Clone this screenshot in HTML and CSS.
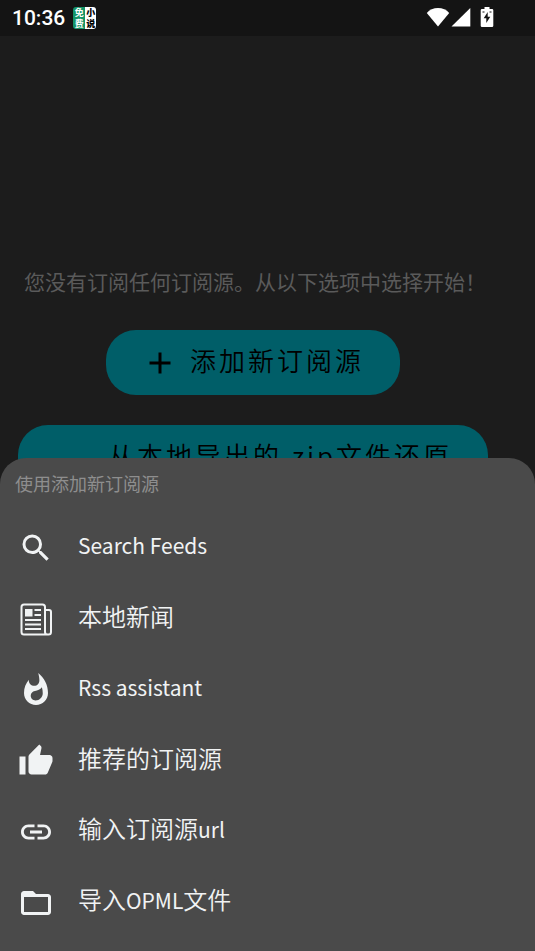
FILE: index.html
```html
<!DOCTYPE html>
<html lang="zh-CN">
<head>
<meta charset="utf-8">
<meta name="viewport" content="width=device-width, initial-scale=1">
<title>添加新订阅源</title>
<link rel="stylesheet" href="styles.css">
</head>
<body>
<header class="status">
  <time class="clock">10:36</time>
  <span class="app-badge"><span class="badge-left">免<br>费</span><span class="badge-right">小<br>说</span></span>
  <span class="indicators">
    <svg width="24" height="20" viewBox="0 0 24 20"><path fill="#fff" d="M12 19.500.8 6C3.500 2.800 7.500 1 12 1s8.500 1.800 11.200 5z"/></svg>
    <svg width="20" height="20" viewBox="0 0 20 20"><path fill="#fff" d="M.5 19.500 19.300 1v18.500z"/></svg>
    <svg class="battery" width="14" height="20" viewBox="0 0 14 20"><path fill="#fff" d="M4.500 0h5v2H12q1.300 0 1.300 1.300v15.400q0 1.300-1.300 1.300H2q-1.300 0-1.300-1.300V3.300Q.7 2 2 2h2.500z"/><path fill="#141414" d="M7.700 5v4.700h2.600L6.300 16v-4.700H3.700zM2.500 4.500h2v1h-2zM9.500 4.500h2v1h-2z"/></svg>
  </span>
</header>
<main class="page">
  <p class="intro">您没有订阅任何订阅源。从以下选项中选择开始！</p>
  <button class="pill" type="button">
    <svg class="pill-icon" viewBox="0 0 24 24"><path d="M19 13h-6v6h-2v-6H5v-2h6V5h2v6h6z"/></svg>
    <span class="label">添加新订阅源</span>
  </button>
  <button class="pill pill-wide" type="button">
    <span class="label">从本地导出的.zip文件还原</span>
  </button>
</main>
<section class="sheet" aria-labelledby="sheet-title">
  <h2 class="sheet-title" id="sheet-title">使用添加新订阅源</h2>
  <ul class="options">
    <li><button class="option" type="button">
      <svg class="icon" viewBox="0 0 24 24"><path d="M15.500 14h-.79l-.28-.27A6.471 6.471 0 0 0 16 9.500 6.500 6.500 0 1 0 9.500 16c1.610 0 3.090-.59 4.230-1.570l.27.28v.79l5 4.990L20.490 19zm-6 0C7.010 14 5 11.990 5 9.500S7.010 5 9.500 5 14 7.010 14 9.500 11.990 14 9.500 14z"/></svg>
      <span class="label latin">Search Feeds</span></button></li>
    <li><button class="option" type="button">
      <svg class="icon" viewBox="0 0 36 36"><path class="line" d="M27 9h4a2 2 0 0 1 2 2v20a2.500 2.500 0 0 1-2.500 2.500h-1A2.500 2.500 0 0 1 27 31V6a2.500 2.500 0 0 0-2.500-2.500H6A2.500 2.500 0 0 0 3.500 6v25A2.500 2.500 0 0 0 6 33.500h24"/><path d="M7 8h7.500v7.500H7zM16.500 8h6.500v2h-6.500zM16.500 13h6.500v2h-6.500zM7 18h16v2H7zM7 22.500h16v2H7zM7 27h16v2H7z"/></svg>
      <span class="label">本地新闻</span></button></li>
    <li><button class="option" type="button">
      <svg class="icon" viewBox="0 0 24 24"><path d="M13.500.67s.74 2.650.74 4.800c0 2.060-1.350 3.730-3.410 3.730-2.070 0-3.630-1.670-3.630-3.730l.03-.36C5.210 7.510 4 10.620 4 14c0 4.420 3.580 8 8 8s8-3.580 8-8C20 8.610 17.410 3.800 13.500.67zM11.710 19c-1.780 0-3.220-1.400-3.220-3.140 0-1.620 1.050-2.760 2.810-3.120 1.770-.36 3.600-1.210 4.620-2.580.39 1.290.59 2.650.59 4.040 0 2.650-2.150 4.800-4.800 4.800z"/></svg>
      <span class="label latin">Rss assistant</span></button></li>
    <li><button class="option" type="button">
      <svg class="icon" viewBox="0 0 24 24"><path d="M1 21h4V9H1zm22-11c0-1.100-.9-2-2-2h-6.310l.95-4.570.03-.32c0-.41-.17-.79-.44-1.060L14.170 1 7.590 7.590C7.220 7.950 7 8.450 7 9v10c0 1.100.9 2 2 2h9c.83 0 1.540-.5 1.840-1.220l3.020-7.050c.09-.23.14-.47.14-.73z"/></svg>
      <span class="label">推荐的订阅源</span></button></li>
    <li><button class="option" type="button">
      <svg class="icon" viewBox="0 0 24 24"><path d="M3.900 12c0-1.710 1.390-3.100 3.100-3.100h4V7H7c-2.760 0-5 2.240-5 5s2.240 5 5 5h4v-1.900H7c-1.710 0-3.100-1.390-3.100-3.100zM8 13h8v-2H8zm9-6h-4v1.900h4c1.710 0 3.100 1.390 3.100 3.100s-1.390 3.100-3.100 3.100h-4V17h4c2.760 0 5-2.240 5-5s-2.240-5-5-5z"/></svg>
      <span class="label">输入订阅源<span class="latin">url</span></span></button></li>
    <li><button class="option" type="button">
      <svg class="icon" viewBox="0 0 24 24"><path d="M20 6h-8l-2-2H4c-1.100 0-1.990.9-1.990 2L2 18c0 1.100.9 2 2 2h16c1.100 0 2-.9 2-2V8c0-1.100-.9-2-2-2zm0 12H4V8h16z"/></svg>
      <span class="label">导入<span class="latin">OPML</span>文件</span></button></li>
  </ul>
</section>
</body>
</html>
```
FILE: styles.css
```css
* {
  box-sizing: border-box;
}

body {
  margin: 0;
  min-height: 100vh;
  overflow: hidden;
  background: #1c1c1c;
  font-family: "Noto Sans CJK SC", sans-serif;
}

button {
  border: 0;
  margin: 0;
  font: inherit;
  cursor: pointer;
}

.status {
  display: flex;
  align-items: center;
  gap: 8px;
  height: 36px;
  padding: 0 41px 0 12px;
  background: #141414;
}

.clock {
  color: #fff;
  font: 500 21px/36px Roboto, sans-serif;
}

.app-badge {
  display: flex;
  overflow: hidden;
  border-radius: 3px;
  font-size: 9px;
  font-weight: 700;
  line-height: 11px;
  text-align: center;
}

.badge-left {
  width: 12px;
  background: #159468;
  color: #fff;
}

.badge-right {
  width: 11px;
  background: #fff;
  color: #000;
  font-weight: 900;
}

.indicators {
  display: flex;
  gap: 1px;
  margin-left: auto;
  padding-bottom: 2px;
}

.battery {
  margin-left: 8px;
}

.page {
  display: flex;
  flex-direction: column;
  align-items: center;
  gap: 30px;
  padding: 230px 29px 0 0;
}

.intro {
  align-self: stretch;
  margin: 0;
  padding: 0 0 4px 24px;
  color: #5a5a5a;
  font-size: 21px;
  line-height: 30px;
  white-space: nowrap;
}

.label {
  padding-bottom: 6px;
}

.pill {
  display: flex;
  align-items: center;
  gap: 12px;
  min-height: 65px;
  padding: 0 36px;
  border-radius: 30px;
  background: #005e68;
  color: #000;
  font-size: 26px;
  font-weight: 350;
  letter-spacing: 3px;
  white-space: nowrap;
}

.pill-wide {
  padding-left: 90px;
}

.pill-icon {
  width: 36px;
  height: 36px;
}

.sheet {
  position: fixed;
  right: 0;
  bottom: 0;
  left: 0;
  padding-bottom: 13px;
  border-radius: 26px 26px 0 0;
  background: #4a4a4a;
}

.sheet-title {
  margin: 0;
  padding: 0 15px 4px;
  color: #8e8e8e;
  font-size: 18px;
  font-weight: 400;
  line-height: 50px;
}

.options {
  margin: 0;
  padding: 0;
  list-style: none;
}

.option {
  display: flex;
  align-items: center;
  gap: 24px;
  width: 100%;
  height: 71px;
  padding: 0 18px;
  background: none;
  color: #f1f3f4;
  font-size: 24px;
  font-weight: 350;
  line-height: 36px;
  text-align: left;
}

.latin {
  font-size: 21px;
  font-weight: 400;
}

.icon {
  width: 36px;
  height: 36px;
  fill: #f1f3f4;
}

.line {
  fill: none;
  stroke: #f1f3f4;
  stroke-width: 2;
}
```
